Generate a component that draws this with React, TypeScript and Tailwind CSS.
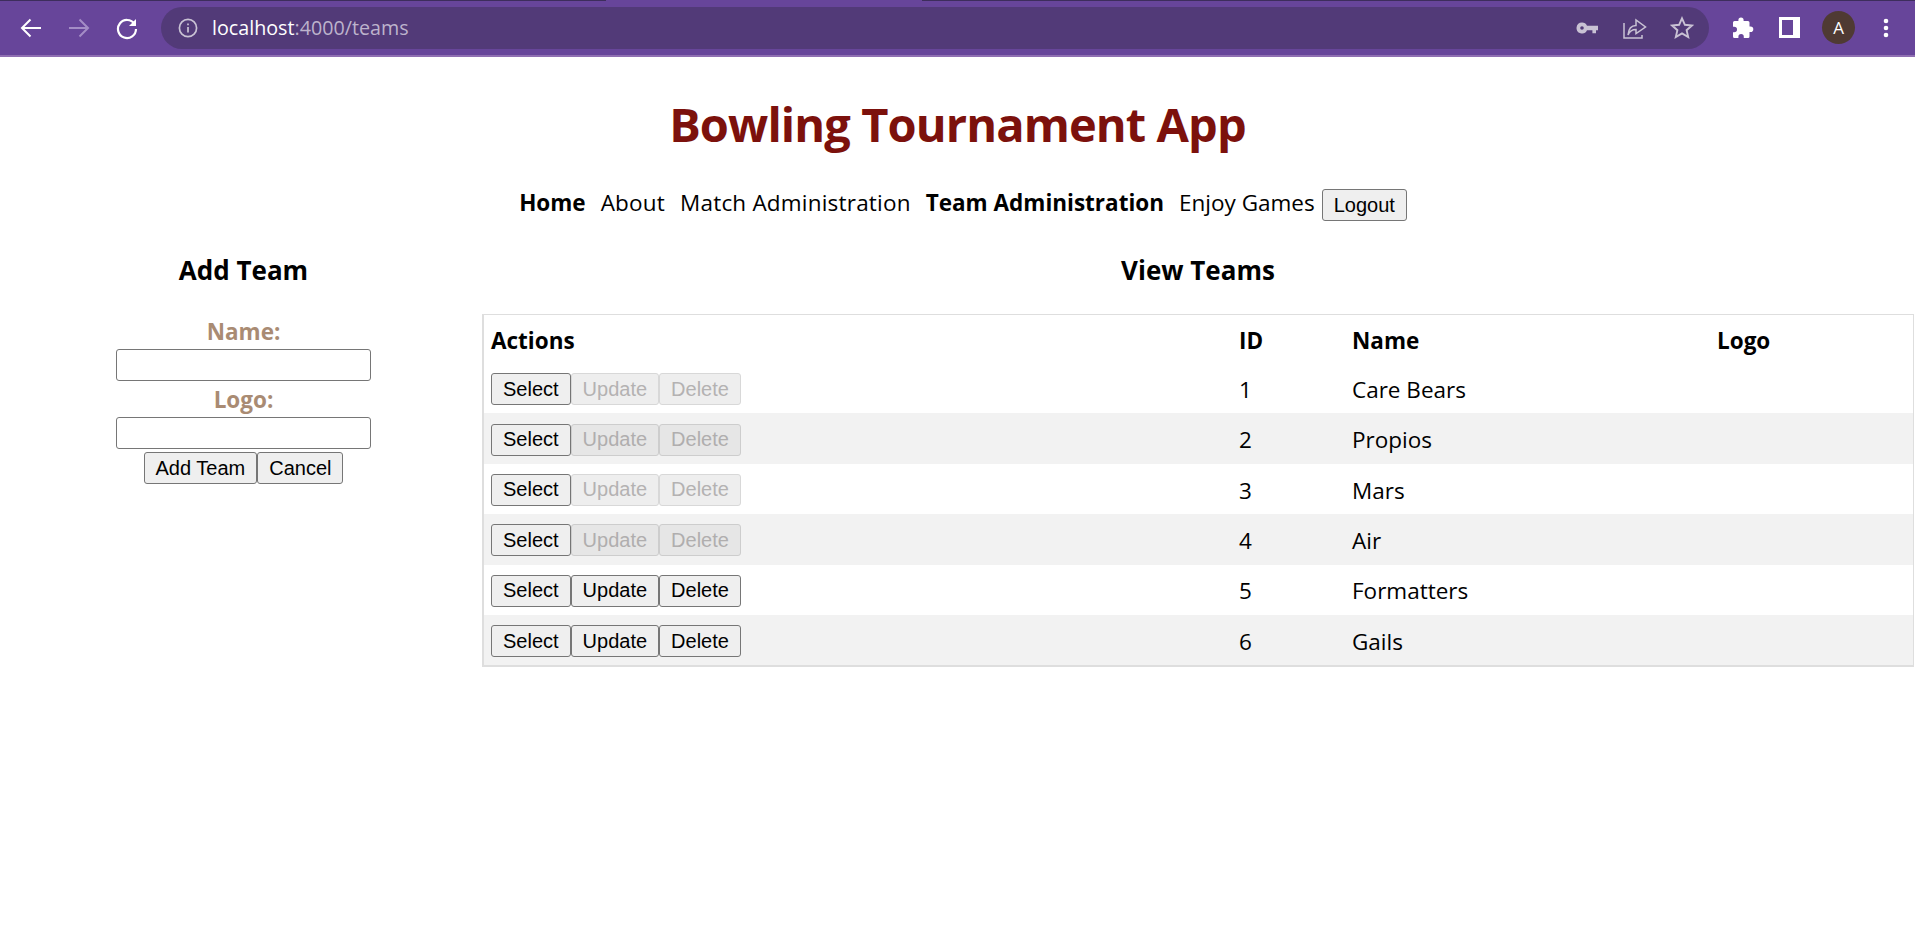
import React from "react";

const rows = [
  { id: 1, name: "Care Bears", enabled: false },
  { id: 2, name: "Propios", enabled: false },
  { id: 3, name: "Mars", enabled: false },
  { id: 4, name: "Air", enabled: false },
  { id: 5, name: "Formatters", enabled: true },
  { id: 6, name: "Gails", enabled: true },
];

function Btn({ children, disabled, shaded }: { children: React.ReactNode; disabled?: boolean; shaded?: boolean }) {
  return (
    <button
      disabled={disabled}
      className={
        disabled
          ? shaded
            ? "h-[32px] px-[11px] rounded-[3px] border border-[#cdcdcd] bg-[#e6e6e6] text-[#b0aeae] text-[20px] leading-[23px] font-['Liberation_Sans',sans-serif] align-middle"
            : "h-[32px] px-[11px] rounded-[3px] border border-[#d8d8d8] bg-[#eeeeee] text-[#b4b2b2] text-[20px] leading-[23px] font-['Liberation_Sans',sans-serif] align-middle"
          : "h-[32px] px-[11px] rounded-[3px] border border-[#767676] bg-[#efefef] text-black text-[20px] leading-[23px] font-['Liberation_Sans',sans-serif] align-middle"
      }
    >
      {children}
    </button>
  );
}

function ChromeBar() {
  return (
    <header className="h-[57px] bg-[#67459a] border-b-2 border-[#8f6fb2] flex items-center relative">
      <div className="absolute left-0 top-0 h-[1px] w-[606px] bg-[#3d2d5c]" />
      <div className="absolute left-[922px] top-0 h-[1px] right-0 bg-[#3d2d5c]" />
      <div className="w-[161px] flex items-center pl-[19px] gap-[24px] shrink-0">
        <svg width="24" height="24" viewBox="0 0 24 24" fill="none" stroke="#fff" strokeWidth="2"><path d="M22 12H3M11.5 3.5 3 12l8.5 8.5" /></svg>
        <svg width="24" height="24" viewBox="0 0 24 24" fill="none" stroke="#a48dc6" strokeWidth="2"><path d="M2 12h19M12.5 3.5 21 12l-8.5 8.5" /></svg>
        <svg width="24" height="24" viewBox="0 0 24 24" fill="none" stroke="#fff" strokeWidth="2.2"><path d="M19.5 8A9 9 0 1 0 21 13" /><path d="M21 3v7h-7z" fill="#fff" stroke="none" /></svg>
      </div>
      <div className="w-[1548px] h-[42px] rounded-full bg-[#523a78] flex items-center pl-[17px] pr-[15px] shrink-0">
        <svg width="20" height="20" viewBox="0 0 20 20" fill="none" stroke="#c9c2d4" strokeWidth="1.7"><circle cx="10" cy="10" r="8.6" /><path d="M10 9v5.5M10 5.4v1.8" /></svg>
        <span className="ml-[14px] text-[19.7px] font-['Open_Sans',sans-serif] text-white">localhost<span className="text-[#bdb3cc]">:4000/teams</span></span>
        <div className="ml-auto flex items-center gap-[24px]">
          <svg width="24" height="24" viewBox="0 0 24 24" fill="#c9c2d4"><path d="M7 6.500a5.500 5.500 0 0 1 5 3.200h11v4.600h-2v3h-3.600v-3h-5.400A5.500 5.500 0 1 1 7 6.500zm0 3.700a1.800 1.800 0 1 0 0 3.600 1.800 1.800 0 0 0 0-3.600z" /></svg>
          <svg width="24" height="24" viewBox="0 0 24 24" fill="none" stroke="#c9c2d4" strokeWidth="1.500"><path d="M1 7v15h18v-3" /><path d="M5 19c.5-6 3.500-9.500 8-9.500V4l9.500 7L13 17.500V13.500c-4 0-6.500 2-8 5.500z" /></svg>
          <svg width="24" height="24" viewBox="0 0 24 24" fill="none" stroke="#c9c2d4" strokeWidth="1.900" className="-ml-[1px]"><path d="M12 2.300l2.900 6.500 7 .7-5.300 4.700 1.600 6.900-6.200-3.700-6.200 3.700 1.600-6.900-5.300-4.700 7-.7z" /></svg>
        </div>
      </div>
      <div className="flex items-center pl-[22px]">
        <svg width="24" height="24" viewBox="0 0 24 24" fill="#fff"><path d="M10 1.500a2.600 2.600 0 0 1 2.600 2.600V5H17a1.500 1.500 0 0 1 1.500 1.500v4h1a2.800 2.800 0 0 1 0 5.600h-1v4.400A1.500 1.500 0 0 1 17 22h-4.200v-1.200a2.700 2.700 0 0 0-5.400 0V22H3.500A1.500 1.500 0 0 1 2 20.500v-4.200h1.200a2.800 2.800 0 0 0 0-5.600H2V6.500A1.500 1.500 0 0 1 3.500 5h3.900v-.9A2.600 2.600 0 0 1 10 1.500z" /></svg>
        <svg width="21" height="21" viewBox="0 0 21 21" fill="#fff" className="ml-[24px]"><path fillRule="evenodd" d="M0 0h21v21H0zM3 3v15h11V3z" /></svg>
        <div className="ml-[22px] w-[33px] h-[33px] rounded-full bg-[#4f3a33] text-white flex items-center justify-center text-[17px] font-['Open_Sans',sans-serif]">A</div>
        <svg width="6" height="24" viewBox="0 0 6 24" fill="#fff" className="ml-[28px]"><circle cx="3" cy="5" r="2.300" /><circle cx="3" cy="12" r="2.300" /><circle cx="3" cy="19" r="2.300" /></svg>
      </div>
    </header>
  );
}

export default function App() {
  return (
    <div className="min-h-[945px] bg-white text-black font-['Open_Sans',sans-serif] text-[22.5px]">
      <ChromeBar />
      <h1 className="mt-[35px] h-[64px] leading-[64px] text-center text-[47px] tracking-[-0.9px] font-bold text-[#7c110c]">Bowling Tournament App</h1>
      <nav className="mt-[33px] h-[32px] flex items-center justify-center gap-[15px] pl-[11px]">
        <a className="mb-[4px] font-bold">Home</a>
        <a className="mb-[4px] tracking-[0.2px]">About</a>
        <a className="mb-[4px] tracking-[0.2px]">Match Administration</a>
        <a className="mb-[4px] font-bold">Team Administration</a>
        <a className="mb-[4px] -mr-[8px]">Enjoy Games</a>
        <Btn>Logout</Btn>
      </nav>
      <div className="flex">
        <section className="w-[482px] pl-[5px] shrink-0 text-center">
          <h2 className="mt-[30px] h-[38px] leading-[38px] text-[26px] font-bold">Add Team</h2>
          <form className="mt-[24px] flex flex-col items-center">
            <label className="h-[36px] leading-[38px] font-bold text-[#a98b73]">Name:</label>
            <input className="w-[255px] h-[32px] border border-[#767676] rounded-[3px] bg-white" />
            <label className="h-[36px] leading-[38px] font-bold text-[#a98b73]">Logo:</label>
            <input className="w-[255px] h-[32px] border border-[#767676] rounded-[3px] bg-white" />
            <div className="mt-[3px] flex">
              <Btn>Add Team</Btn>
              <Btn>Cancel</Btn>
            </div>
          </form>
        </section>
        <section className="flex-1 min-w-0 mr-[1px]">
          <h2 className="mt-[30px] h-[38px] leading-[38px] text-[26px] font-bold text-center">View Teams</h2>
          <div className="mt-[25px] border-t border-r border-b-2 border-l-2 border-[#dedede]">
            <table className="w-full table-fixed">
              <colgroup>
                <col className="w-[748px]" />
                <col className="w-[113px]" />
                <col className="w-[365px]" />
                <col />
              </colgroup>
              <thead>
                <tr className="h-[48px] text-left">
                  <th className="pl-[7px] font-bold pt-[3px]">Actions</th>
                  <th className="pl-[7px] font-bold pt-[3px]">ID</th>
                  <th className="pl-[7px] font-bold pt-[3px]">Name</th>
                  <th className="pl-[7px] font-bold pt-[3px]">Logo</th>
                </tr>
              </thead>
              <tbody>
                {rows.map((r, i) => (
                  <tr key={r.id} className={i % 2 === 1 ? "h-[50.4px] bg-[#f2f2f2]" : "h-[50.4px] bg-white"}>
                    <td className="pl-[7px] pt-[2px] whitespace-nowrap">
                      <div className="flex">
                        <Btn>Select</Btn>
                        <Btn disabled={!r.enabled} shaded={i % 2 === 1}>Update</Btn>
                        <Btn disabled={!r.enabled} shaded={i % 2 === 1}>Delete</Btn>
                      </div>
                    </td>
                    <td className="pl-[7px] pt-[3px]">{r.id}</td>
                    <td className="pl-[7px] pt-[3px]">{r.name}</td>
                    <td />
                  </tr>
                ))}
              </tbody>
            </table>
          </div>
        </section>
      </div>
    </div>
  );
}
